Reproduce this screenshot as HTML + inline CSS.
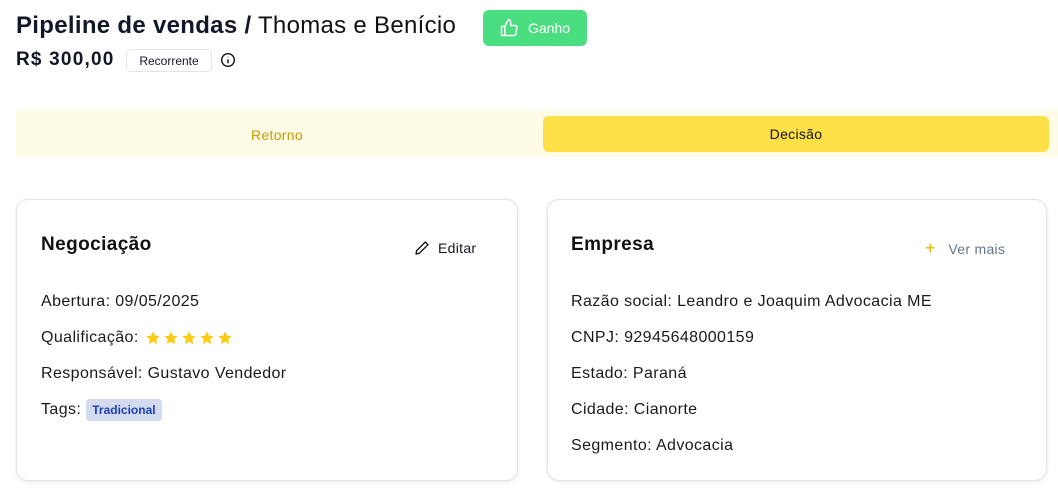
<!DOCTYPE html>
<html><head><meta charset="utf-8"><style>
*{box-sizing:border-box;margin:0;padding:0}
body{width:1058px;height:504px;background:#fff;font-family:"Liberation Sans",sans-serif;color:#111827;position:relative;overflow:hidden}
.abs{position:absolute}
.card{position:absolute;top:199px;height:282px;border:1px solid #e3e4e8;border-radius:12px;box-shadow:0 1px 4px rgba(0,0,0,.08);background:#fff}
.row{position:absolute;left:24px;font-size:16px;color:#1a1a1a;letter-spacing:0.4px;white-space:nowrap}
</style></head><body>
<div class="abs" style="left:16px;top:12px;font-size:24px;white-space:nowrap;letter-spacing:0.3px"><b>Pipeline de vendas /</b> <span style="color:#111">Thomas e Benício</span></div>
<div class="abs" style="left:483px;top:10px;width:104px;height:36px;background:#4ade80;border-radius:6px;color:#fff;font-size:14px;display:flex;align-items:center;padding-left:16px">
<svg width="20" height="20" viewBox="0 0 24 24" fill="none" stroke="#fff" stroke-width="1.8" stroke-linecap="round" stroke-linejoin="round"><path d="M7 10v11H3V10h4zM7 10l4-8a3 3 0 0 1 3 3v4h5.5a2 2 0 0 1 2 2.3l-1.4 8A2 2 0 0 1 18.1 21H7"/></svg>
<span style="margin-left:9px">Ganho</span></div>
<div class="abs" style="left:16px;top:49px;font-size:19px;font-weight:bold;letter-spacing:1.2px">R$ 300,00</div>
<div class="abs" style="left:126px;top:49px;width:86px;height:23px;border:1px solid #e3e4e8;border-radius:5px;font-size:12px;display:flex;align-items:center;justify-content:center">Recorrente</div>
<svg class="abs" style="left:220px;top:52px" width="16" height="16" viewBox="0 0 16 16" fill="none" stroke="#111" stroke-width="1.4"><circle cx="8" cy="8" r="6.3"/><path d="M8 7.2v4M8 4.8v.3"/></svg>
<div class="abs" style="left:16px;top:110px;width:1042px;height:47px;background:#fefbe6"></div>
<div class="abs" style="left:16px;top:127px;width:522px;text-align:center;font-size:14px;color:#ca9a04;letter-spacing:0.3px">Retorno</div>
<div class="abs" style="left:543px;top:116px;width:506px;height:36px;background:#fde047;border-radius:6px;font-size:14px;display:flex;align-items:center;justify-content:center;color:#111;letter-spacing:0.3px">Decisão</div>
<div class="card" style="left:16px;width:502px">
<div class="row" style="top:34px;font-size:19px;font-weight:bold;color:#111">Negociação</div>
<div class="abs" style="left:397px;top:40px;font-size:14px;display:flex;align-items:center;letter-spacing:0.3px"><svg width="16" height="16" viewBox="0 0 24 24" fill="none" stroke="#111" stroke-width="2" stroke-linecap="round" stroke-linejoin="round"><path d="M17 3l4 4L8 20l-5 1 1-5z"/></svg><span style="margin-left:8px">Editar</span></div>
<div class="row" style="top:93px">Abertura: 09/05/2025</div>
<div class="row" style="top:129px;display:flex;align-items:center">Qualificação:<span style="display:flex;gap:2px;margin-left:6px">
<svg width="16" height="16" viewBox="0 0 24 24"><path fill="#facc15" d="M12 2l3 6.5 7 .8-5.2 4.8 1.5 7L12 17.6 5.7 21l1.5-7L2 9.3l7-.8z"/></svg>
<svg width="16" height="16" viewBox="0 0 24 24"><path fill="#facc15" d="M12 2l3 6.5 7 .8-5.2 4.8 1.5 7L12 17.6 5.7 21l1.5-7L2 9.3l7-.8z"/></svg>
<svg width="16" height="16" viewBox="0 0 24 24"><path fill="#facc15" d="M12 2l3 6.5 7 .8-5.2 4.8 1.5 7L12 17.6 5.7 21l1.5-7L2 9.3l7-.8z"/></svg>
<svg width="16" height="16" viewBox="0 0 24 24"><path fill="#facc15" d="M12 2l3 6.5 7 .8-5.2 4.8 1.5 7L12 17.6 5.7 21l1.5-7L2 9.3l7-.8z"/></svg>
<svg width="16" height="16" viewBox="0 0 24 24"><path fill="#facc15" d="M12 2l3 6.5 7 .8-5.2 4.8 1.5 7L12 17.6 5.7 21l1.5-7L2 9.3l7-.8z"/></svg>
</span></div>
<div class="row" style="top:165px">Responsável: Gustavo Vendedor</div>
<div class="row" style="top:199px;display:flex;align-items:center">Tags:<span style="margin-left:5px;background:#d4dbf0;color:#1e40af;font-size:12px;font-weight:bold;padding:4px 6px;border-radius:4px;letter-spacing:0">Tradicional</span></div>
</div>
<div class="card" style="left:547px;width:500px">
<div class="row" style="top:34px;left:23px;font-size:19px;font-weight:bold;color:#111">Empresa</div>
<div class="abs" style="left:377px;top:38px;font-size:14px;color:#64748b;letter-spacing:0.3px"><span style="color:#eab308;font-size:18px">+</span>&nbsp;&nbsp;&nbsp;Ver mais</div>
<div class="row" style="top:93px;left:23px">Razão social: Leandro e Joaquim Advocacia ME</div>
<div class="row" style="top:129px;left:23px">CNPJ: 92945648000159</div>
<div class="row" style="top:165px;left:23px">Estado: Paraná</div>
<div class="row" style="top:201px;left:23px">Cidade: Cianorte</div>
<div class="row" style="top:237px;left:23px">Segmento: Advocacia</div>
</div>
</body></html>
